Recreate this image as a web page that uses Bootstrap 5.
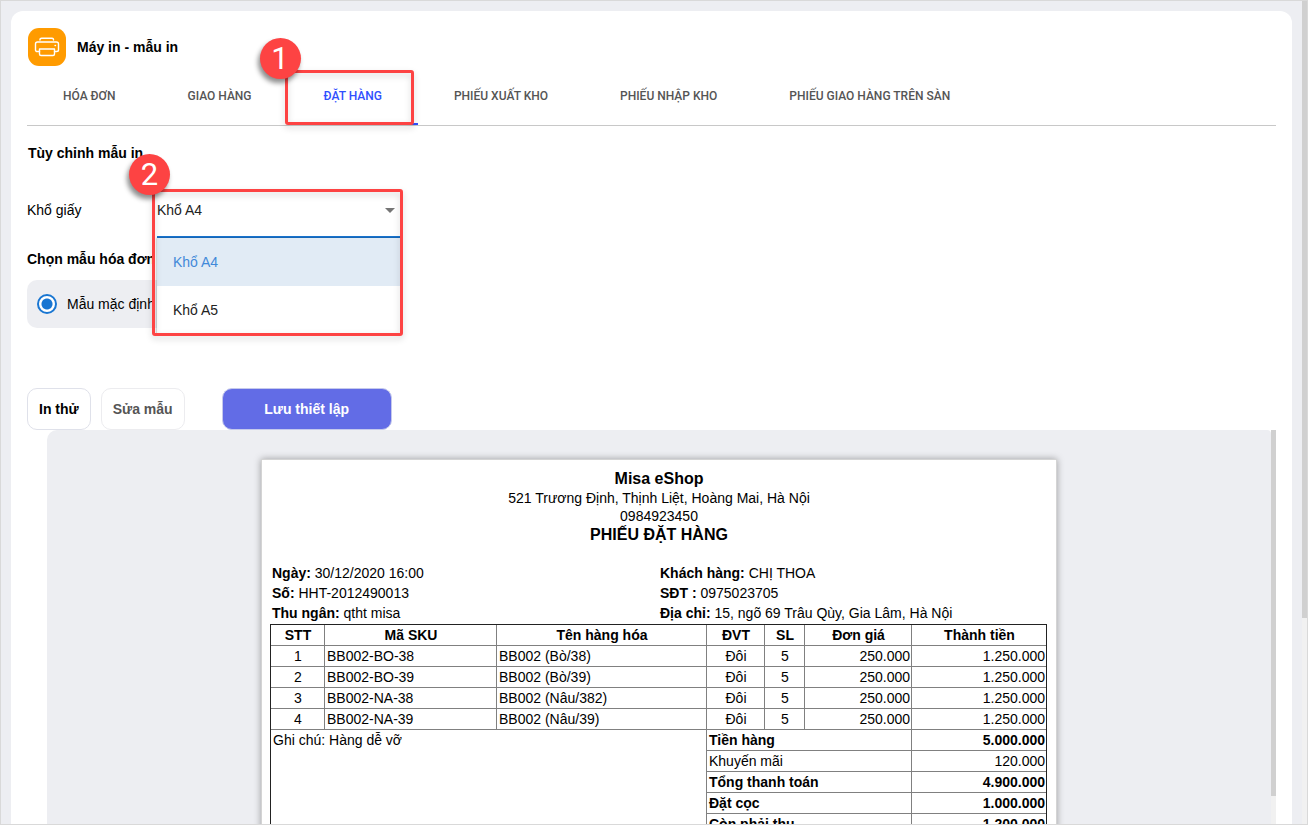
<!DOCTYPE html>
<html lang="vi">
<head>
<meta charset="utf-8">
<meta name="viewport" content="width=device-width, initial-scale=1">
<title>Máy in - mẫu in</title>
<link href="https://cdn.jsdelivr.net/npm/bootstrap@5.3.0/dist/css/bootstrap.min.css" rel="stylesheet">
<style>
  :root { --surface: #edeef2; --line: #d9d9d9; --accent: #1976d2; --mark-red: #fd4343; --brand: #626ce6; }
  body { font-family: "Liberation Sans", Arial, sans-serif; font-size: 14px; line-height: 20px; color: #000; background: var(--surface); }
  .screen { height: 100vh; border: 1px solid var(--line); padding-left: 10px; }
  .panel { margin: 10px 10px 0 0; border-radius: 12px 12px 0 0; padding: 17px 16px 0; min-width: 0; }
  .app-head { gap: 11px; padding-left: 1px; }
  .app-head h1 { font-size: 14px; line-height: 20px; }
  .app-icon { width: 38px; height: 38px; border-radius: 11px; background: #ff9b00; }

  .tabs { border-bottom: 1px solid #c8c8c8; }
  .tabs .nav-link { font-family: Roboto, sans-serif; font-weight: 500; font-size: 12px; line-height: 16px; color: #555; background: transparent; padding: 3px 36px 0; height: 59px; border: 0; border-bottom: 2px solid transparent; border-radius: 0; white-space: nowrap; }
  .tabs .nav-link.active { color: #304ffe; border-color: #304ffe; }

  .marked::after { content: ""; position: absolute; border: 3px solid var(--mark-red); border-radius: 3px; filter: drop-shadow(0 3px 3px rgba(0,0,0,.16)); pointer-events: none; z-index: 5; }
  .tab-mark::after { inset: 4px 4px 0 -3px; }
  .pick-mark::after { inset: 5px -2px auto -5px; height: 147px; }
  .step { position: absolute; width: 41px; height: 41px; border-radius: 50%; background: var(--mark-red); color: #fff; font: 31px/41px Roboto, sans-serif; text-align: center; box-shadow: -2px 4px 5px rgba(0,0,0,.45); z-index: 6; }
  .step-one { left: -28px; top: -28px; }
  .step-two { left: -28px; top: -30px; }

  .block-title { margin-top: 17px; padding-left: 1px; }
  .field-row { margin-top: 21px; }
  .field-label { width: 130px; padding-bottom: 2px; }
  .picker { width: 244px; }
  .picker select { display: block; appearance: none; width: 100%; height: 54px; border: 0; border-bottom: 2px solid var(--accent); background: #fff; padding: 0; color: #222; outline: 0; }
  .picker .caret { position: absolute; right: 6px; top: 24px; }
  .options { position: absolute; left: 0; top: 54px; width: 100%; z-index: 3; background: #fff; box-shadow: 0 0 2px rgba(0,0,0,.4); }
  .options button { height: 48px; border: 0; background: #fff; color: #222; text-align: left; padding: 0 16px; }
  .options button.chosen { background: #e1ebf5; color: #4189d9; }

  .group-title { margin: 11px 0; }
  .sample { width: 150px; height: 48px; gap: 10px; border-radius: 10px; background: var(--surface); padding-left: 10px; white-space: nowrap; }
  .sample input { appearance: none; flex: none; width: 20px; height: 20px; margin: 0; border: 2px solid var(--accent); border-radius: 50%; background: radial-gradient(circle, var(--accent) 5px, #fff 6px); }

  .tools { margin-top: 60px; gap: 10px; }
  .tool { height: 42px; border: 1px solid #dfe1ea; border-radius: 10px; background: #fff; color: #000; font-weight: 700; padding: 0 11px; }
  .tool-muted { color: #555; border-color: #ececef; }
  .tool-main { width: 170px; background: var(--brand); color: #fff; border-color: #c5c9ec; margin-left: 27px; }

  .viewer { flex: 1 1 0; min-height: 0; overflow: hidden; padding-left: 20px; }
  .preview { background: var(--surface); border-radius: 10px 4px 0 0; padding-top: 29px; }
  .track { width: 5px; flex: none; background: #f1f1f1; }
  .thumb { background: #d0d0d0; }

  .paper { width: 796px; height: 1000px; flex: none; padding: 9px 8px; background: #fff; border: 1px solid #d4d4d4; box-shadow: 0 0 7px rgba(0,0,0,.35); }
  .paper-head { line-height: 18px; }
  .paper h2 { font-size: 16px; line-height: 20px; font-weight: 700; margin: 0; }
  .facts { padding: 0 2px; margin: 18px 0 1px; }
  .facts > div { flex: 0 0 388px; }
  .receipt { width: 777px; table-layout: fixed; border-collapse: collapse; outline: 1px solid #222; outline-offset: -1px; }
  .receipt td, .receipt th { height: 21px; line-height: 18px; padding: 1px 1px 1px 2px; border: 1px solid #808080; }
  .receipt th[scope=row] { text-align: left; }
  .c-no { width: 54px; } .c-sku { width: 172px; } .c-name { width: 210px; } .c-unit { width: 58px; } .c-qty { width: 40px; } .c-price { width: 107px; }
</style>
</head>
<body>
<div class="screen d-flex overflow-hidden">
  <main class="panel bg-white flex-grow-1 d-flex flex-column">
    <header class="app-head d-flex align-items-center">
      <span class="app-icon d-flex align-items-center justify-content-center">
        <svg width="26" height="20" viewBox="0 0 26 20" fill="none" stroke="#fff" stroke-width="1.4" stroke-linejoin="round" stroke-linecap="round"><path d="M6 3V2.500Q6 1.200 7.500 1.200H18Q19.500 1.200 19.500 2.500V3"/><path d="M5.500 14.500H3.500Q1.500 14.500 1.500 13V7Q1.500 5 3.500 5H22.500Q24.500 5 24.500 7V13Q24.500 14.500 22.500 14.500H20.500"/><path d="M5.500 12H20.500V17Q20.500 18.500 19 18.500H7Q5.500 18.500 5.500 17Z"/><path d="M21 8.500H21.500"/></svg>
      </span>
      <h1 class="fw-bold mb-0">Máy in - mẫu in</h1>
    </header>
    <nav class="nav tabs flex-nowrap">
      <button class="nav-link" type="button">HÓA ĐƠN</button>
      <button class="nav-link" type="button">GIAO HÀNG</button>
      <div class="position-relative marked tab-mark"><button class="nav-link active" type="button">ĐẶT HÀNG</button><span class="step step-one">1</span></div>
      <button class="nav-link" type="button">PHIẾU XUẤT KHO</button>
      <button class="nav-link" type="button">PHIẾU NHẬP KHO</button>
      <button class="nav-link" type="button">PHIẾU GIAO HÀNG TRÊN SÀN</button>
    </nav>
    <div class="block-title fw-bold">Tùy chỉnh mẫu in</div>
    <div class="field-row d-flex align-items-center">
      <label class="field-label" for="size">Khổ giấy</label>
      <div class="picker position-relative marked pick-mark">
        <select id="size"><option>Khổ A4</option><option>Khổ A5</option></select>
        <svg class="caret" width="10" height="5"><path d="M0 0H10L5 5Z" fill="#757575"/></svg>
        <div class="options d-flex flex-column"><button class="chosen" type="button">Khổ A4</button><button type="button">Khổ A5</button></div>
        <span class="step step-two">2</span>
      </div>
    </div>
    <div class="group-title fw-bold">Chọn mẫu hóa đơn</div>
    <label class="sample d-flex align-items-center flex-shrink-0"><input type="radio" name="sample" checked>Mẫu mặc định</label>
    <div class="tools d-flex">
      <button class="tool" type="button">In thử</button>
      <button class="tool tool-muted" type="button">Sửa mẫu</button>
      <button class="tool tool-main" type="button">Lưu thiết lập</button>
    </div>
    <div class="viewer d-flex">
      <section class="preview flex-grow-1 d-flex justify-content-center">
        <article class="paper">
          <div class="paper-head text-center">
            <h2>Misa eShop</h2>
            <div>521 Trương Định, Thịnh Liệt, Hoàng Mai, Hà Nội</div>
            <div>0984923450</div>
            <h2>PHIẾU ĐẶT HÀNG</h2>
          </div>
          <div class="facts d-flex">
            <div><b>Ngày:</b> 30/12/2020 16:00<br><b>Số:</b> HHT-2012490013<br><b>Thu ngân:</b> qtht misa</div>
            <div><b>Khách hàng:</b> CHỊ THOA<br><b>SĐT :</b> 0975023705<br><b>Địa chỉ:</b> 15, ngõ 69 Trâu Qùy, Gia Lâm, Hà Nội</div>
          </div>
          <table class="receipt">
            <colgroup><col class="c-no"><col class="c-sku"><col class="c-name"><col class="c-unit"><col class="c-qty"><col class="c-price"><col></colgroup>
            <thead class="text-center"><tr><th>STT</th><th>Mã SKU</th><th>Tên hàng hóa</th><th>ĐVT</th><th>SL</th><th>Đơn giá</th><th>Thành tiền</th></tr></thead>
            <tbody>
              <tr><td class="text-center">1</td><td>BB002-BO-38</td><td>BB002 (Bò/38)</td><td class="text-center">Đôi</td><td class="text-center">5</td><td class="text-end">250.000</td><td class="text-end">1.250.000</td></tr>
              <tr><td class="text-center">2</td><td>BB002-BO-39</td><td>BB002 (Bò/39)</td><td class="text-center">Đôi</td><td class="text-center">5</td><td class="text-end">250.000</td><td class="text-end">1.250.000</td></tr>
              <tr><td class="text-center">3</td><td>BB002-NA-38</td><td>BB002 (Nâu/382)</td><td class="text-center">Đôi</td><td class="text-center">5</td><td class="text-end">250.000</td><td class="text-end">1.250.000</td></tr>
              <tr><td class="text-center">4</td><td>BB002-NA-39</td><td>BB002 (Nâu/39)</td><td class="text-center">Đôi</td><td class="text-center">5</td><td class="text-end">250.000</td><td class="text-end">1.250.000</td></tr>
              <tr><td colspan="3" rowspan="5" class="align-top">Ghi chú: Hàng dễ vỡ</td><th scope="row" colspan="3">Tiền hàng</th><td class="text-end fw-bold">5.000.000</td></tr>
              <tr><td colspan="3">Khuyến mãi</td><td class="text-end">120.000</td></tr>
              <tr><th scope="row" colspan="3">Tổng thanh toán</th><td class="text-end fw-bold">4.900.000</td></tr>
              <tr><th scope="row" colspan="3">Đặt cọc</th><td class="text-end fw-bold">1.000.000</td></tr>
              <tr><th scope="row" colspan="3">Còn phải thu</th><td class="text-end fw-bold">1.200.000</td></tr>
            </tbody>
          </table>
        </article>
      </section>
      <div class="track"><div class="thumb" style="height:93%"></div></div>
    </div>
  </main>
  <div class="track"><div class="thumb" style="height:75%"></div></div>
</div>
<script src="https://cdn.jsdelivr.net/npm/bootstrap@5.3.0/dist/js/bootstrap.bundle.min.js"></script>
</body>
</html>
